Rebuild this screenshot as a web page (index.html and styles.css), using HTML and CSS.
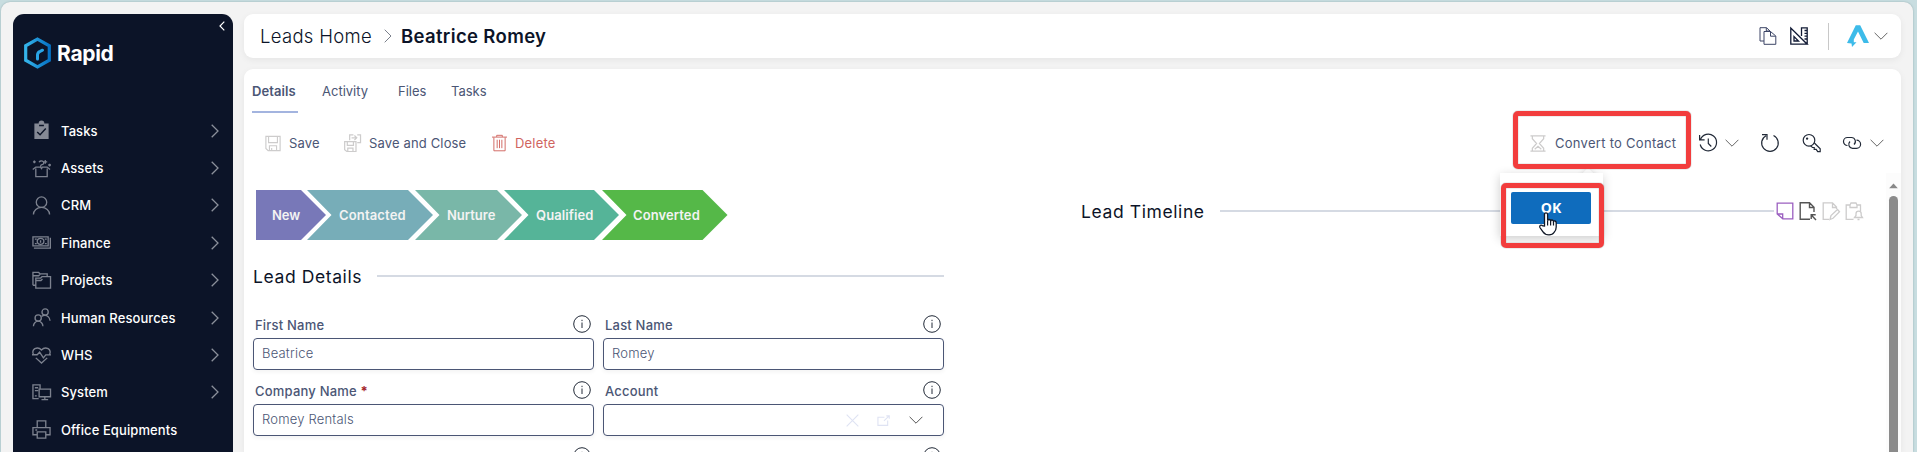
FILE: index.html
```html
<!DOCTYPE html>
<html lang="en">
<head>
<meta charset="utf-8">
<title>Beatrice Romey</title>
<link rel="stylesheet" href="styles.css">
</head>
<body>
<svg class="defs" width="0" height="0">
  <defs>
    <symbol id="right" viewBox="0 0 8 14"><path d="M.7.7 7 7 .7 13.300"/></symbol>
    <symbol id="down" viewBox="0 0 14 8"><path d="M.6.8 7 7.200 13.400.8"/></symbol>
    <symbol id="info" viewBox="0 0 18 18"><circle cx="9" cy="9" r="8.300"/><path d="M9 7.500v5.500M9 4.800v1.300"/></symbol>
    <linearGradient id="hex" x1="0" x2="1"><stop offset="0" stop-color="#35b4ea"/><stop offset="1" stop-color="#0672c4"/></linearGradient>
  </defs>
</svg>
<div class="window">
  <nav class="sidebar">
    <svg class="collapse" viewBox="0 0 6 10"><path d="M5.300.7 1 5l4.300 4.300"/></svg>
    <div class="brand">
      <svg class="brand-mark" viewBox="0 0 28 32"><path d="M14 2.200 25.800 8.800v14.400L14 29.800 2.200 23.200V8.800z" fill="none" stroke="url(#hex)" stroke-width="3.200"/><path d="M14 22v-4q0-2.600 2.600-3.700l2.400-1.100" fill="none" stroke="#2aa5e6" stroke-width="3" stroke-linecap="round"/></svg>
      <span>Rapid</span>
    </div>
    <ul class="menu">
      <li><svg class="mi" viewBox="0 0 20 20"><path class="solid" d="M2.500 2.500H7a3 3 0 0 1 6 0h4.500V19h-15z"/><path class="cut" d="m5.500 11.500 3 3 6-6.500M7.500 4.700h5"/></svg><span>Tasks</span><svg class="go"><use href="#right"/></svg></li>
      <li><svg class="mi" viewBox="0 0 20 20"><path d="M4 10v8.500h12V10M.8 11l3.200-2.500h5l1 1.500 1-1.500h5l3 2.500M7.500 3.500a2.500 2 0 1 1 3 2.500q-2 .5-1 2.300M1 3h3M2.500 1.500v3M14 1v4M12 3h4M17 6.300h3M18.500 5v3"/></svg><span>Assets</span><svg class="go"><use href="#right"/></svg></li>
      <li><svg class="mi" viewBox="0 0 20 20"><circle cx="10" cy="6.500" r="5.500"/><path d="M1.500 19.500a8.500 7.500 0 0 1 17 0"/></svg><span>CRM</span><svg class="go"><use href="#right"/></svg></li>
      <li><svg class="mi" viewBox="0 0 20 20"><path d="M1 4h16v9.500H1zM2 16h17.300V5"/><path d="M3 6.500h2M3 11.200h2M13.500 6.500h2M13.500 11.200h2"/><ellipse cx="9" cy="8.800" rx="3.500" ry="3.200"/><path d="M9 7.500v2.700"/></svg><span>Finance</span><svg class="go"><use href="#right"/></svg></li>
      <li><svg class="mi" viewBox="0 0 20 20"><path d="M4 7.500h5l1.500-1.500h9V18H4zM1 15V1.500h6L8.500 3H16v3M1 5h6l1.500-1.500M1 15h3M4 10h5.500L11 8.500"/></svg><span>Projects</span><svg class="go"><use href="#right"/></svg></li>
      <li><svg class="mi" viewBox="0 0 20 20"><circle cx="6.500" cy="10.500" r="3.300"/><circle cx="13.800" cy="4.300" r="3.300"/><path d="M1.500 19.200a5 5.300 0 0 1 10 0M10 8.800q4-2.400 7 .3 2 2 2 4.200"/></svg><span>Human Resources</span><svg class="go"><use href="#right"/></svg></li>
      <li><svg class="mi" viewBox="0 0 20 20"><path d="M1.500 9Q-.3 5 3 2.800 7 .8 10 4.200q3-3.400 7-1.400 3.300 2.200 1.500 6.200M4 12.500l6 5.500 6-5.500M0 9.200h5.500L8 6.500l4 6 2.500-3.200H20"/></svg><span>WHS</span><svg class="go"><use href="#right"/></svg></li>
      <li><svg class="mi" viewBox="0 0 20 20"><path d="M7 16.500H1V2h7.500v4M3 5h3.500M3 8h3.500M7.500 6.500h12v8h-12zM13.500 14.500v3M10 17.500h7M3 13.500h2"/></svg><span>System</span><svg class="go"><use href="#right"/></svg></li>
      <li><svg class="mi" viewBox="0 0 20 20"><path d="M5.500 8V1h9v7M5.500 15.500H1V8h18v7.500h-4.500M5.500 12.500h9v6.500h-9zM3.500 10.500h2"/></svg><span>Office Equipments</span></li>
    </ul>
  </nav>
  <main class="main">
    <header class="card header">
      <span class="crumb">Leads Home</span>
      <svg class="crumb-sep"><use href="#right"/></svg>
      <h1>Beatrice Romey</h1>
      <div class="header-tools">
        <svg class="copy" viewBox="0 0 18 18"><path d="M5 14H1V.7h6.500L11 4v1M7.300.8V4H11M5 4.500h6.500L16.800 9v8.300H5zM11.500 4.700V9.200h5"/></svg>
        <svg class="design" viewBox="0 0 18 18"><path d="M.8 1v16.200h16.400zM4 9.500V14h4.500zM11.500 9V.8h5.700v16M14.500 3.500h2.700M14.500 6.300h2.700M14.500 9.200h2.700M14.500 12h2.700"/></svg>
        <i class="rule"></i>
        <svg class="avatar" viewBox="0 0 22 22"><path d="M8.800.3h4.400L22 18h-5.300L11 6.500 6.800 14.500v2.700H9.500L5 22l-.5-3.500L0 18z" fill="#3dbbe9"/></svg>
        <svg class="dn"><use href="#down"/></svg>
      </div>
    </header>
    <section class="card body">
      <div class="tabs">
        <span class="t1 active">Details</span><span class="t2">Activity</span><span class="t3">Files</span><span class="t4">Tasks</span>
      </div>
      <div class="toolbar">
        <div class="cmd save"><svg class="pale" viewBox="0 0 18 18"><path d="M1 1h16v16H3.500L1 14.500zM4 1v7h10V1M5 17v-5.500h8V17M7.500 14v3"/></svg><span>Save</span></div>
        <div class="cmd saveclose"><svg class="pale" viewBox="0 0 18 18"><path d="M6 6V.5h4M14 .5h3.500v8H14M8 3.500h5.500M11 1l2.500 2.500L11 6M.7 7.500h12V18H3L.7 16zM3.500 7.500v4H10v-4M4 18v-3.500h5.500V18"/></svg><span>Save and Close</span></div>
        <div class="cmd delete"><svg viewBox="0 0 16 18"><path d="M0 2.700h16M5 2.500V.8h6v1.700M2 3v14.300h12V3M5.500 5.500v9M8 5.500v9M10.500 5.500v9"/></svg><span>Delete</span></div>
        <div class="cmd convert"><svg class="pale" viewBox="0 0 16 18"><path d="M0 1h16M0 17h16M2 1v3l4.500 5L2 14v3M14 1v3L9.500 9l4.500 5v3M4.500 15 8 12l3.500 3"/></svg><span>Convert to Contact</span><i class="callout-beak"></i></div>
        <div class="tools">
          <svg class="ic" viewBox="0 0 18 18"><path d="M1.500 5.500a8.300 8.300 0 1 1-.3 5M.6 1v4.800h5M9.300 4.500V9.500l3 3"/></svg>
          <svg class="dn d1"><use href="#down"/></svg>
          <svg class="ic i2" viewBox="0 0 18 18"><path d="M12.500 1.500a8.300 8.300 0 1 1-7.500.2M1 .7h5v5"/></svg>
          <svg class="ic i3" viewBox="0 0 18 18"><circle cx="6.500" cy="6.300" r="5.800"/><circle cx="4.600" cy="4.600" r=".6"/><path d="M8 11.900 10 13.500h1.700v1.800h2l1.500 2.300h2.500v-2.900l-5.800-5.700"/></svg>
          <svg class="ic i4" viewBox="0 0 18 18"><path d="M4.500 11.500A4 4 0 0 1 4.500 3.500h4a4 4 0 0 1 2.500 7M13.500 6.200a4 4 0 0 1 0 8.200h-4A4 4 0 0 1 7 7.500"/></svg>
          <svg class="dn d4"><use href="#down"/></svg>
        </div>
      </div>
      <div class="panes">
        <div class="left">
          <div class="stages">
            <div class="s new">New</div><div class="s contacted">Contacted</div><div class="s nurture">Nurture</div><div class="s qualified">Qualified</div><div class="s converted">Converted</div>
          </div>
          <div class="section details"><h2>Lead Details</h2><i></i></div>
          <div class="form">
            <div class="field"><label class="l1">First Name</label><svg class="info"><use href="#info"/></svg><div class="input v1">Beatrice</div></div>
            <div class="field"><label class="l2">Last Name</label><svg class="info"><use href="#info"/></svg><div class="input v2">Romey</div></div>
            <div class="field"><label class="l3">Company Name <b>*</b></label><svg class="info"><use href="#info"/></svg><div class="input v3">Romey Rentals</div></div>
            <div class="field"><label class="l4">Account</label><svg class="info"><use href="#info"/></svg><div class="input lookup">
              <svg class="faint x" viewBox="0 0 14 14"><path d="m.7.700 12.600 12.600M13.300.7.700 13.300"/></svg>
              <svg class="faint pop" viewBox="0 0 14 12"><path d="M8 2.500H1v8.800h10.500V6M7.500 6.500l5.300-5.300M10 1h3.200v3.200"/></svg>
              <svg class="dn"><use href="#down"/></svg></div></div>
            <div class="field last"><label></label><svg class="info"><use href="#info"/></svg></div>
            <div class="field last"><label></label><svg class="info"><use href="#info"/></svg></div>
          </div>
        </div>
        <div class="right">
          <div class="section timeline"><h2>Lead Timeline</h2><i></i>
            <div class="acts">
              <svg class="note" viewBox="0 0 18 18"><path d="M1.200 1.200h15.600v15.600h-10L1.200 12zM1.200 12h5.500v4.800"/></svg>
              <svg class="doc" viewBox="0 0 18 18"><path d="M11 17.300H1.200V.8h9.300L15 5.300V10M10.500.8v4.700H15M17 18l-4.700-5M12.200 17v-4.300h4.500"/></svg>
              <svg class="pale" viewBox="0 0 18 18"><path d="M7 17.300H1.200V.8h9.300L14.500 5v2M10.500.8v4.700H14M8 17.500l1-4 6.500-6 2 2.300-6.500 6.500z"/></svg>
              <svg class="pale" viewBox="0 0 18 18"><path d="M8.500 17.300H1.200V3H5l1-2h5l1 2h3.500v6M5 3v2.500h7V3M9.500 15.500h8l-1.300-2v-1.800a2.500 2.500 0 0 0-5.200 0v1.800zM12.500 17.500h2"/></svg>
            </div>
          </div>
        </div>
        <div class="scroll"><svg viewBox="0 0 10 6"><path d="M5 .3 9.800 5.500H.2z"/></svg><i></i></div>
      </div>
    </section>
  </main>
</div>
<div class="callout"><button>OK</button></div>
<div class="mark mark-convert"></div>
<div class="mark mark-ok"></div>
<svg class="cursor" viewBox="0 0 18 24"><path d="M5.500 14V2.500q0-1.700 1.500-1.700t1.600 1.700V8.500q.3-1 1.500-1t1.600 1.300q.3-.9 1.400-.8 1.300.2 1.400 1.500.4-.7 1.400-.5 1.300.3 1.300 1.800V15q0 3.500-2.200 5.500-1.500 2.400-5 2.400-4 0-6-3L.9 15.500q-.6-1.400.5-2.200 1.200-.7 2.400.6z" fill="#fff" stroke="#111827" stroke-width="1.300"/><path d="M8.600 8.500v5M11.600 9v4.500M14.500 10v3.500" stroke="#111827" stroke-width="1.200"/></svg>
</body>
</html>
```
FILE: styles.css
```css
* { box-sizing: border-box; }
body { margin: 0; height: 452px; overflow: hidden; position: relative; padding: 2px 4px 0 1px; background: #c8dde0; font-family: Inter, "Liberation Sans", sans-serif; font-size: 13px; color: #4b5675; }
h1, h2, ul, p { margin: 0; padding: 0; font-weight: 400; }
span, label, h1, h2 { white-space: nowrap; }
svg { flex: none; display: block; fill: none; stroke: currentColor; overflow: visible; }
.defs { position: absolute; }
.window { display: flex; gap: 11px; height: 450px; padding: 12px 12px 0; background: #f3f3f3; border-radius: 9px 9px 0 0; box-shadow: 0 0 2px #8fa9ad; overflow: hidden; }

.sidebar { position: relative; width: 220px; height: 438px; background: #0c1428; border-radius: 11px 11px 0 0; color: #fff; }
.collapse { position: absolute; left: 206px; top: 7px; width: 6px; height: 10px; stroke-width: 1.200; }
.brand { display: flex; gap: 5px; align-items: center; height: 32px; margin: 23px 0 0 10px; font-size: 21px; font-weight: 700; letter-spacing: -.3px; }
.brand-mark { width: 29px; height: 32px; }
.menu { list-style: none; padding: 43px 14px 0 19px; font-weight: 500; letter-spacing: .1px; }
.menu li { display: flex; align-items: center; height: 37.400px; }
.mi { width: 19px; height: 19px; margin-right: 10px; color: #7c818e; stroke-width: 1.400; }
.mi .solid { fill: #858995; stroke: none; }
.mi .cut { stroke: #0c1428; stroke-width: 1.500; }
.go { width: 8px; height: 14px; margin-left: auto; color: #8b909b; stroke-width: 1.300; }

.main { flex: 1; display: flex; flex-direction: column; gap: 11px; }
.card { background: #fff; border-radius: 9px; box-shadow: 0 2px 7px rgba(0,0,0,.06); }
.header { display: flex; align-items: center; height: 44px; padding: 0 14px 0 16px; color: #0c1428; font-size: 18.500px; }
.crumb { width: 124px; font-weight: 300; letter-spacing: .3px; }
.crumb-sep { width: 8px; height: 14px; margin-right: 9px; color: #7b808b; }
.header h1 { font-size: 18.500px; font-weight: 600; letter-spacing: .35px; }
.header-tools { display: flex; align-items: center; margin-left: auto; }
.copy, .design { width: 18px; height: 18px; margin-right: 13px; color: #3c4566; }
.design { color: #111a35; margin-right: 20px; stroke-width: 1.300; }
.rule { width: 1px; height: 27px; background: #c8c8c8; margin-right: 18px; }
.avatar { width: 22px; height: 22px; margin-right: 5px; stroke: none; }
.dn { width: 14px; height: 8px; margin-right: -1px; color: #666; }

.body { height: 383px; border-radius: 9px 9px 0 0; }
.tabs { display: flex; height: 44px; padding-left: 8px; line-height: 44px; }
.tabs span { margin-right: 25px; }
.tabs .t1 { width: 46px; margin-right: 24px; font-size: 13px; font-weight: 600; letter-spacing: .1px; border-bottom: 2px solid #a3b4df; }
.tabs .t2 { width: 51px; }
.tabs .t3 { width: 28px; }
.toolbar { display: flex; align-items: center; height: 60px; padding: 0 18px 0 21px; }
.cmd { display: flex; align-items: center; position: relative; gap: 8px; letter-spacing: .15px; }
.cmd svg { width: 16px; height: 17px; }
.save { width: 79px; }
.saveclose { width: 148px; }
.saveclose svg { width: 17px; height: 18px; }
.cmd.delete { color: #d0645f; letter-spacing: .2px; }
.cmd.delete svg { width: 15px; height: 18px; }
.cmd .pale, .pale { color: #cdcccc; stroke-width: 1.300; }
.convert { margin-left: auto; width: 169px; gap: 9px; letter-spacing: .28px; }
.tools { display: flex; align-items: center; color: #222a38; }
.ic { width: 18px; height: 18px; stroke-width: 1.200; }
.d1 { margin: 0 22px 0 8px; }
.i3 { margin: 0 22px 0 23px; width: 19px; }
.d4 { margin-left: 9px; }

.panes { display: flex; height: 279px; }
.left { width: 700px; padding: 17px 0 0 9px; }
.stages { display: flex; padding-left: 3px; height: 50px; line-height: 50px; color: #f3f3f3; font-weight: 600; }
.s { padding-left: 32px; margin-left: -19px; clip-path: polygon(0 0, calc(100% - 25px) 0, 100% 50%, calc(100% - 25px) 100%, 0 100%, 24.500px 50%); }
.s.new { width: 70px; margin: 0; padding-left: 16px; background: #7878b8; clip-path: polygon(0 0, calc(100% - 25px) 0, 100% 50%, calc(100% - 25px) 100%, 0 100%); }
.s.contacted { width: 126px; background: #77adb8; letter-spacing: .15px; }
.s.nurture { width: 107px; margin-left: -18px; background: #79b7a8; }
.s.qualified { width: 115px; margin-left: -18px; background: #55b498; letter-spacing: .1px; }
.s.converted { width: 125.500px; margin-left: -17px; padding-left: 31px; background: #55b848; letter-spacing: .1px; }
.section { display: flex; align-items: center; color: #0c1428; }
.section h2 { font-size: 17.500px; letter-spacing: .6px; }
.section > i { height: 2px; flex: 1; background: #d5dae3; }
.details { margin-top: 19px; height: 34px; }
.details h2 { width: 124px; padding-top: 1px; }
.form { display: grid; grid-template-columns: 341px 341px; column-gap: 9px; padding-top: 20px; }
.field { display: flex; flex-wrap: wrap; height: 66px; padding-top: 2px; }
.field.last { height: 25px; }
.field label { height: 23px; line-height: 21px; flex: 1; padding-left: 2px; font-weight: 500; letter-spacing: .2px; }
.field b { color: #a4262c; }
.info { width: 18px; height: 18px; margin: 0 3px 0 0; color: #222a38; }
.input { width: 341px; height: 32px; border: 1px solid #4b5675; border-radius: 4px; padding-left: 8px; line-height: 29px; font-weight: 300; letter-spacing: .2px; box-shadow: 0 2px 4px rgba(0,0,0,.05); margin-bottom: 9px; }
.lookup { display: flex; align-items: center; padding: 0 20px 0 0; justify-content: flex-end; }
.faint { width: 13px; height: 13px; color: #dfe3f3; stroke-width: 1.200; }
.x { margin-right: 18px; }
.pop { margin-right: 19px; }
.lookup .dn { color: #555; margin-right: 0; }
.right { flex: 1; padding: 21px 23px 0 137px; }
.timeline { height: 34px; }
.timeline h2 { width: 139px; padding-top: 1px; }
.acts { display: flex; gap: 5px; padding-left: 2px; }
.acts svg { width: 18px; height: 18px; }
.acts svg:first-child { margin-right: 0; }
.note { color: #9b5fc0; stroke-width: 1.300; }
.doc { color: #555; stroke-width: 1.400; }
.scroll { width: 15px; background: #fcfcfc; padding: 10px 3px 0; }
.scroll svg { width: 9px; height: 6px; fill: #888; stroke: none; }
.scroll i { display: block; width: 9px; height: 256px; margin-top: 7px; background: #8b8b8b; border-radius: 5px 5px 0 0; }

.callout-beak { position: absolute; left: 50px; top: 36px; width: 16px; height: 16px; background: #fff; transform: rotate(45deg); box-shadow: 0 0 5px rgba(0,0,0,.12); }
.callout { position: absolute; left: 1500px; top: 173px; width: 103px; height: 63px; padding: 19px 11px; background: #fff; box-shadow: 0 3px 10px rgba(0,0,0,.2); }
.callout button { display: block; width: 80px; height: 32px; padding: 0; border: 0; border-radius: 2px; background: #0f6cbd; color: #fff; font: 700 14px/32px "Open Sans", sans-serif; }
.mark { position: absolute; border: 5px solid #f23d3d; border-radius: 5px; box-shadow: 0 0 1px #555, inset 0 0 1px #555; }
.mark-convert { left: 1513px; top: 111px; width: 178px; height: 58px; }
.mark-ok { left: 1501px; top: 183px; width: 103px; height: 65px; }
.cursor { position: absolute; left: 1539px; top: 212px; width: 18px; height: 24px; stroke: none; }
```
